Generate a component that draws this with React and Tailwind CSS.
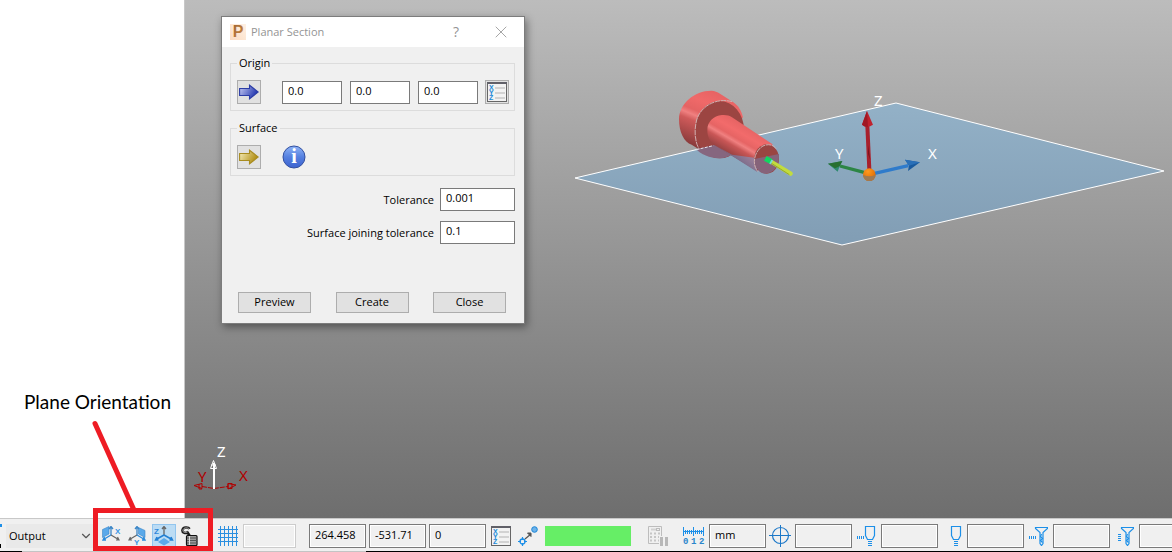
import React, { useState } from 'react';
import { ChevronDown, X } from 'lucide-react';

const ArrowIcon = ({ id, light, dark, edge }) => (
  <svg width="20" height="16" viewBox="0 0 20 16" aria-hidden="true">
    <defs>
      <linearGradient id={id} x1="0" y1="0" x2="1" y2="0.4">
        <stop offset="0" stopColor={light} />
        <stop offset="1" stopColor={dark} />
      </linearGradient>
    </defs>
    <path d="M.6 4.5H10.5V1.2L19.2 8l-8.7 6.8v-3.3H.6z" fill={`url(#${id})`} stroke={edge} strokeWidth="1.1" />
  </svg>
);

const XyzIcon = () => (
  <svg width="20" height="20" viewBox="0 0 20 20" aria-hidden="true">
    <rect x=".5" y=".5" width="19" height="19" fill="#f2f2f2" stroke="#666" />
    <rect width="20" height="2" fill="#606068" />
    <g fontFamily="Liberation Sans" fontWeight="bold" fontSize="7" fill="#1c8ad8">
      <text x="2" y="8">X</text>
      <text x="2" y="13">Y</text>
      <text x="2" y="18">Z</text>
    </g>
    <path d="M8 6H18M8 11H18M8 16H18" stroke="#d2d2d2" strokeWidth="2" />
  </svg>
);

const InfoIcon = () => (
  <svg width="24" height="24" viewBox="0 0 24 24" role="img" aria-label="Information">
    <defs>
      <linearGradient id="info" x1="0" y1="0" x2="0" y2="1">
        <stop offset="0" stopColor="#8fb4f6" />
        <stop offset="0.5" stopColor="#5580e0" />
        <stop offset="1" stopColor="#3c62cf" />
      </linearGradient>
    </defs>
    <circle cx="12" cy="12" r="11" fill="url(#info)" stroke="#3350a0" />
    <text x="12" y="18" textAnchor="middle" fontFamily="Liberation Serif" fontWeight="bold" fontSize="20" fill="#fff">i</text>
  </svg>
);

const AppIcon = () => (
  <svg width="16" height="16" viewBox="0 0 16 16" aria-hidden="true">
    <defs>
      <linearGradient id="app" x1="1" y1="0" x2="0" y2="1">
        <stop offset="0" stopColor="#fff1e4" />
        <stop offset="1" stopColor="#fbdcc2" />
      </linearGradient>
      <linearGradient id="appLetter" x1="0" y1="0" x2="1" y2="1">
        <stop offset="0" stopColor="#9a6434" />
        <stop offset="1" stopColor="#d38a3e" />
      </linearGradient>
    </defs>
    <rect width="16" height="16" fill="url(#app)" />
    <text x="8" y="13" textAnchor="middle" fontFamily="Liberation Sans" fontWeight="bold" fontSize="16" fill="url(#appLetter)">P</text>
  </svg>
);

const PlaneXIcon = () => (
  <svg width="20" height="20" viewBox="0 0 20 20" aria-hidden="true">
    <path d="M.5 3.500l6.500-3v7.500l-6.500 3.500z" fill="#5aa9ea" stroke="#3c86c6" strokeWidth=".6" />
    <path d="M9 9V1M7 3l2-2.500L11 3" fill="none" stroke="#3c86c6" strokeWidth="1.300" />
    <path d="M9 9l-7.500 4.500M4 14H1l1.500-3" fill="none" stroke="#2b8bdc" strokeWidth="1.400" />
    <path d="M9 9l7.500 4.500M14 14h3l-1.500-3" fill="none" stroke="#666" strokeWidth="1.200" />
    <text x="13" y="8" fontFamily="Liberation Sans" fontWeight="bold" fontSize="8" fill="#3b97e4">X</text>
  </svg>
);

const PlaneYIcon = () => (
  <svg width="20" height="20" viewBox="0 0 20 20" aria-hidden="true">
    <path d="M10.500 1.500l6.500 3v7l-6.500-3.500z" fill="#5aa9ea" stroke="#3c86c6" strokeWidth=".6" />
    <path d="M9 9V1M7 3l2-2.500L11 3" fill="none" stroke="#3c86c6" strokeWidth="1.300" />
    <path d="M9 9l-7.500 4.500M4 14H1l1.500-3" fill="none" stroke="#666" strokeWidth="1.200" />
    <path d="M9 9l7.500 4.500M14 14h3l-1.500-3" fill="none" stroke="#2b8bdc" strokeWidth="1.400" />
    <text x="6" y="19" fontFamily="Liberation Sans" fontWeight="bold" fontSize="8" fill="#3b97e4">Y</text>
  </svg>
);

const PlaneZIcon = () => (
  <svg width="20" height="20" viewBox="0 0 20 20" aria-hidden="true">
    <path d="M10 12l6 4-6 3.500L4 16z" fill="#5aa9ea" />
    <path d="M10 9V1M8 3l2-2.500L12 3" fill="none" stroke="#666" strokeWidth="1.300" />
    <path d="M10 9l-8 4.500M4.500 14H1.500l1.500-3M10 9l8 4.500M15.500 14h3l-1.500-3" fill="none" stroke="#2380d4" strokeWidth="1.500" />
    <text x="0" y="8" fontFamily="Liberation Sans" fontWeight="bold" fontSize="8" fill="#2f86da">Z</text>
  </svg>
);

const LockIcon = () => (
  <svg width="20" height="20" viewBox="0 0 20 20" aria-hidden="true">
    <path d="M9.500 2.800C8.500 1 3 .6 2.500 4S6 7.300 7.500 6.500L9.500 9.500" fill="none" stroke="#1a1a1a" strokeWidth="2.600" />
    <path d="M9 2.800C8 1.500 3.500 1.200 3 4S6 7 7.500 6" fill="none" stroke="#b5b5b5" strokeWidth=".9" />
    <rect x="6.500" y="9.500" width="10.500" height="10" rx="1" fill="#9c9c9c" stroke="#111" strokeWidth="1.200" />
    <path d="M7 12h10M7 14.500h10M7 17h10" stroke="#555" />
    <path d="M9.500 10v9" stroke="#ddd" />
  </svg>
);

const GridIcon = () => (
  <svg width="20" height="20" viewBox="0 0 20 20" aria-hidden="true">
    <path d="M2.500 0v20M6.500 0v20M10.500 0v20M14.500 0v20M18.500 0v20M0 3.500h20M0 7.500h20M0 11.500h20M0 15.500h20" stroke="#2b8fe0" />
  </svg>
);

const PointIcon = () => (
  <svg width="20" height="20" viewBox="0 0 20 20" aria-hidden="true">
    <circle cx="16.500" cy="3.500" r="2.800" fill="#6cb2ea" stroke="#1c86d6" />
    <path d="M7 13l6-5" stroke="#555" strokeWidth="1.200" />
    <path d="M9.500 7h3.500v3.500z" fill="#555" stroke="#555" />
    <circle cx="4.500" cy="15.500" r="2.500" fill="none" stroke="#1c8fe8" strokeWidth="1.300" />
    <path d="M4.500 11v3M4.500 17v3M0 15.500h3M6 15.500h3" stroke="#1c8fe8" strokeWidth="1.200" />
  </svg>
);

const CalcIcon = () => (
  <svg width="20" height="20" viewBox="0 0 20 20" aria-hidden="true">
    <path d="M.5.500h13V10M11 17.500H.5V.5" fill="none" stroke="#bdbdbd" />
    <path d="M3 3.500h6" stroke="#d2d2d2" strokeWidth="2" />
    <rect x="8.500" y="2.500" width="3" height="2" fill="none" stroke="#bdbdbd" />
    <path d="M2 7.500h11M2 11h9M2 14.500h9" stroke="#c6c6c6" strokeWidth="2" strokeDasharray="2 2" />
    <path d="M13.500 11v9M18.500 11v9" stroke="#b8b8b8" strokeWidth="3" />
  </svg>
);

const RulerIcon = () => (
  <svg width="22" height="20" viewBox="0 0 22 20" aria-hidden="true">
    <path d="M.5 1v9M10.500 1v9M20.500 1v9M0 5.500h21M2.500 4v4M4.500 4v4M6.500 4v4M8.500 4v4M12.500 4v4M14.500 4v4M16.500 4v4M18.500 4v4" stroke="#1c8fe8" />
    <g fontFamily="Liberation Mono" fontWeight="bold" fontSize="9" fill="#2a86cc">
      <text x="0" y="18">0</text>
      <text x="8" y="18">1</text>
      <text x="16" y="18">2</text>
    </g>
  </svg>
);

const TargetIcon = () => (
  <svg width="22" height="22" viewBox="0 0 22 22" fill="none" stroke="#1c78c8" aria-hidden="true">
    <circle cx="11.500" cy="10.500" r="8" strokeWidth="1.200" />
    <path d="M11.500 0v22M0 10.500h22" />
  </svg>
);

const ToolIcon = ({ lead }) => (
  <svg width="20" height="20" viewBox="0 0 20 20" fill="none" stroke="#1c8fe8" aria-hidden="true">
    <path d="M9.500.500h9v9l-2 4h-5l-2-4z" strokeWidth="1.200" />
    <path d="M12 15.500h4M12 17.500h4M12 19.500h4" />
    {lead && <path d="M1.500 10v3M3.500 10v3M5.500 10v3M7.500 10v3" />}
  </svg>
);

const DrillIcon = ({ side }) => (
  <svg width="20" height="20" viewBox="0 0 20 20" fill="none" stroke="#1c8fe8" aria-hidden="true">
    <path d="M7.500 1.500h12v1l-4.500 4v11l-1.500 2-1.500-2v-11l-4.500-4z" strokeWidth="1.200" />
    <path d="M13.500 8l-1 2.500 2 2-2 2 2 2" strokeWidth="1.200" />
    {side ? <path d="M4 8.500h3M4 10.500h3M4 12.500h3M4 14.500h3" /> : <path d="M1.500 10v3M3.500 10v3M5.500 10v3M7.500 10v3" />}
  </svg>
);

// 3D view: section plane, part and the two axis triads
const Scene = () => (
  <svg className="absolute left-0 top-0" width="987" height="518" viewBox="185 0 987 518" role="img" aria-label="3D view">
    <defs>
      <linearGradient id="plane" x1="0" y1="0" x2="0" y2="1">
        <stop offset="0" stopColor="#93b1c7" />
        <stop offset="1" stopColor="#819db4" />
      </linearGradient>
      <linearGradient id="head" gradientUnits="userSpaceOnUse" x1="125" y1="35" x2="55" y2="205">
        <stop offset="0" stopColor="#e86464" />
        <stop offset="0.2" stopColor="#f06969" />
        <stop offset="0.38" stopColor="#e46363" />
        <stop offset="0.46" stopColor="#f08080" />
        <stop offset="0.55" stopColor="#cf5a5a" />
        <stop offset="1" stopColor="#7d3535" />
      </linearGradient>
      <linearGradient id="shaft" gradientUnits="userSpaceOnUse" x1="245" y1="140" x2="190" y2="235">
        <stop offset="0" stopColor="#e46262" />
        <stop offset="0.3" stopColor="#f26b6b" />
        <stop offset="0.48" stopColor="#e66464" />
        <stop offset="0.58" stopColor="#f08080" />
        <stop offset="0.7" stopColor="#c95656" />
        <stop offset="1" stopColor="#8e3e3e" />
      </linearGradient>
      <linearGradient id="under" gradientUnits="userSpaceOnUse" x1="230" y1="220" x2="200" y2="255">
        <stop offset="0" stopColor="#9a7f9a" />
        <stop offset="1" stopColor="#6f6584" />
      </linearGradient>
      <radialGradient id="ball" cx="0.4" cy="0.25" r="0.8">
        <stop offset="0" stopColor="#ff9a20" />
        <stop offset="1" stopColor="#d86400" />
      </radialGradient>
    </defs>
    <polygon points="575,178 896,103 1164,171 842,245" fill="url(#plane)" stroke="#fff" />
    <g transform="translate(670 80) scale(0.3333)">
      <path d="M125 32C134 33 142 36 150 41L190 67C206 78 214 92 219 112L114 225L65 194C42 188 27 155 27 118C27 70 75 31 125 32z" fill="url(#head)" />
      <ellipse cx="149" cy="149" rx="73" ry="86" fill="#9c4542" />
      <path d="M79 208L130 196L216 184C202 216 178 235 149 235C118 235 92 222 79 208z" fill="#86667f" />
      <path d="M79 209L130 197" stroke="#e4e4ee" strokeWidth="3" strokeDasharray="9 4" />
      <path d="M186 65C140 52 92 78 80 120C72 150 74 185 88 208" fill="none" stroke="#cfb0b0" strokeWidth="3" strokeDasharray="16 2" />
      <path d="M156 105C168 104 178 106 186 112L308 193L262 273L134 196C118 185 112 168 112 150C112 126 130 107 156 105z" fill="url(#shaft)" />
      <path d="M140 199L160 210L186 224L258 234L262 276z" fill="url(#under)" />
      <ellipse cx="290" cy="237" rx="37" ry="44" fill="#9a4542" />
      <path d="M253 237L327 222C329 256 312 281 285 281C266 279 254 263 253 237z" fill="#86637a" />
      <path d="M318 206C310 192 284 188 268 207C250 226 248 258 264 275" fill="none" stroke="#cfb0b0" strokeWidth="3" strokeDasharray="16 2" />
      <path d="M305 246L362 281" stroke="#c2dc3e" strokeWidth="13" strokeLinecap="round" />
      <path d="M303 249L358 284" stroke="#93a832" strokeWidth="3" />
      <path d="M286 235L304 245" stroke="#10d860" strokeWidth="16" />
      <path d="M300 252L307 240" stroke="#75dcd0" strokeWidth="5" />

      <path d="M598 268L592 135" stroke="#a8202c" strokeWidth="12" />
      <path d="M594 222V195L601 240z" fill="#7c121d" />
      <path d="M591 93L609 134Q592 146 576 134z" fill="#c0222e" />
      <path d="M591 93L594 141Q582 141 576 134z" fill="#a01824" />
      <path d="M614 280L715 257" stroke="#2f7bcb" strokeWidth="10" />
      <path d="M705 239L750 247L714 273L717 257z" fill="#195a9e" />
      <path d="M705 239L750 247L717 257z" fill="#2a70b8" />
      <path d="M582 277L510 258" stroke="#2c8545" strokeWidth="10" />
      <path d="M474 251L517 243L509 259L503 275z" fill="#2f8a70" />
      <path d="M474 251L517 243L509 259L495 265z" fill="#286f30" />
      <circle cx="598" cy="284" r="19" fill="url(#ball)" />
      <path d="M579 284Q598 294 617 284A19 19 0 0 1 579 284z" fill="#a07a52" />
    </g>
    <g fontFamily="Noto Sans" fontSize="15" fill="#fff">
      <text x="874" y="106">Z</text>
      <text x="835" y="159">Y</text>
      <text x="928" y="159">X</text>
      <text x="217" y="457">Z</text>
    </g>
    <g fontFamily="Noto Sans" fontSize="15" fill="#b00000">
      <text x="198" y="482">Y</text>
      <text x="239" y="481">X</text>
    </g>
    <path d="M202 486.500L214 488.500L228 486.500" fill="none" stroke="#b00000" strokeDasharray="5 1" />
    <path d="M194 485.500l8-2v5zM199 484v5h3M236 485l-8-1.500v5.500zM228 483.500h4v5h-4z" fill="none" stroke="#b00000" />
    <path d="M214 489V463" stroke="#fff" strokeWidth="2" />
    <path d="M213.500 460.500l3 8h-6zM211 465h5" fill="none" stroke="#fff" />
  </svg>
);

const IconButton = ({ label, children }) => (
  <button type="button" aria-label={label} className="flex size-6 shrink-0 items-center justify-center border border-[#adadad] bg-[#e1e1e1]">
    {children}
  </button>
);

const Group = ({ title, children }) => (
  <fieldset className="border border-[#dcdcdc] pb-1.5 pl-1.5 pr-[5px]">
    <legend className="px-0.5 leading-4">{title}</legend>
    <div className="flex items-center pt-[9px]">{children}</div>
  </fieldset>
);

const fieldClass = 'h-[23px] border border-[#7a7a7a] bg-white px-[5px] pb-1 outline-none';

const PlanarSection = () => {
  const [origin, setOrigin] = useState(['0.0', '0.0', '0.0']);
  const [tolerance, setTolerance] = useState('0.001');
  const [joining, setJoining] = useState('0.1');

  return (
    <section className="absolute left-9 top-4 w-[304px] border border-[#7c7c7c] bg-[#f0f0f0] text-black shadow-[2px_3px_8px_rgba(0,0,0,0.4)]">
      <header className="flex h-[30px] items-center bg-white pl-2 text-[#949494]">
        <AppIcon />
        <h1 className="grow pl-[5px]">Planar Section</h1>
        <button type="button" aria-label="Help" className="w-4 text-sm">?</button>
        <button type="button" aria-label="Close dialog" className="ml-[27px] mr-[13px]">
          <X size={20} strokeWidth={1} />
        </button>
      </header>

      <div className="flex flex-col gap-[9px] pl-2 pr-[9px] pt-2">
        <Group title="Origin">
          <IconButton label="Pick origin">
            <ArrowIcon id="blueArrow" light="#c9cdf4" dark="#2438b0" edge="#2c3da6" />
          </IconButton>
          <div className="flex grow gap-2 pl-[21px]">
            {origin.map((value, i) => (
              <input
                key={i}
                aria-label={`Origin ${'XYZ'[i]}`}
                value={value}
                onChange={(e) => setOrigin(origin.map((v, j) => (j === i ? e.target.value : v)))}
                className={`${fieldClass} w-[60px]`}
              />
            ))}
          </div>
          <IconButton label="Position"><XyzIcon /></IconButton>
        </Group>

        <Group title="Surface">
          <IconButton label="Pick surface">
            <ArrowIcon id="goldArrow" light="#f7f0c0" dark="#b08c10" edge="#a88c20" />
          </IconButton>
          <span className="pl-[21px]"><InfoIcon /></span>
        </Group>
      </div>

      <div className="flex flex-col gap-2.5 pl-2 pr-[9px] pt-3">
        <div className="flex items-center justify-end gap-1.5">
          <label htmlFor="tolerance" className="pt-0.5">Tolerance</label>
          <input id="tolerance" value={tolerance} onChange={(e) => setTolerance(e.target.value)} className={`${fieldClass} w-[75px]`} />
        </div>
        <div className="flex items-center justify-end gap-1.5">
          <label htmlFor="joining" className="pt-0.5">Surface joining tolerance</label>
          <input id="joining" value={joining} onChange={(e) => setJoining(e.target.value)} className={`${fieldClass} w-[75px]`} />
        </div>
      </div>

      <div className="flex justify-between pb-2.5 pl-4 pr-[18px] pt-12">
        {['Preview', 'Create', 'Close'].map((name) => (
          <button key={name} type="button" className="h-[21px] w-[73px] border border-[#adadad] bg-[#e1e1e1]">
            {name}
          </button>
        ))}
      </div>
    </section>
  );
};

const StatusField = ({ label, value = '' }) => (
  <input
    aria-label={label}
    defaultValue={value}
    className="h-6 w-[57px] shrink-0 border border-[#7a7a7a] bg-[#f0f0f0] px-[5px] pb-1 shadow-[inset_0_0_0_1px_#fff] outline-none"
  />
);

const Tool = ({ label, active, children }) => (
  <button type="button" aria-label={label} aria-pressed={active} className={`flex size-6 shrink-0 items-center justify-center ${active ? 'border border-[#92c5ee] bg-[#bcdcf4]' : ''}`}>
    {children}
  </button>
);

const ToolField = ({ label, icon }) => (
  <div className="flex gap-[3px] pl-0.5">
    <Tool label={label}>{icon}</Tool>
    <StatusField label={`${label} value`} />
  </div>
);

const StatusBar = () => (
  <footer className="overflow-hidden border-t border-[#c8c8c8] bg-[#f0f0f0] text-black">
    <div className="flex items-center pb-[3px] pt-[5px]">
      <div className="flex h-6 w-1.5 shrink-0 flex-col justify-between">
        <span className="h-[3px] w-0.5 bg-[#1c8fe8]" />
        <span className="h-1 w-px bg-black" />
      </div>
      <div className="relative shrink-0">
        <select aria-label="Workplane" className="h-6 w-[87px] appearance-none bg-[#e9e9e9] pl-[3px] outline-none">
          <option>Output</option>
        </select>
        <ChevronDown size={14} strokeWidth={2} className="pointer-events-none absolute right-0 top-[5px] text-[#555]" />
      </div>
      <div className="flex gap-0.5 pl-[7px]">
        <Tool label="YZ plane"><PlaneXIcon /></Tool>
        <Tool label="ZX plane"><PlaneYIcon /></Tool>
        <Tool label="XY plane" active><PlaneZIcon /></Tool>
        <Tool label="Lock plane"><LockIcon /></Tool>
      </div>
      <div className="flex gap-[3px] pl-[14px]">
        <Tool label="Grid"><GridIcon /></Tool>
        <input aria-label="Grid size" disabled className="h-6 w-[53px] border border-[#ccc] bg-[#f0f0f0] shadow-[inset_0_0_0_1px_#fff]" />
      </div>
      <div className="flex gap-[3px] pl-[13px] pr-[3px]">
        <StatusField label="Cursor X" value="264.458" />
        <StatusField label="Cursor Y" value="-531.71" />
        <StatusField label="Cursor Z" value="0" />
      </div>
      <div className="flex gap-[3px]">
        <Tool label="Position"><XyzIcon /></Tool>
        <Tool label="Snap point"><PointIcon /></Tool>
      </div>
      <div className="ml-[5px] mr-[15px] h-5 w-[86px] shrink-0 bg-[#66ee66]" />
      <div className="flex items-center gap-3 pr-[3px]">
        <Tool label="Calculator"><CalcIcon /></Tool>
        <Tool label="Units"><RulerIcon /></Tool>
      </div>
      <StatusField label="Unit" value="mm" />
      <ToolField label="Tolerance" icon={<TargetIcon />} />
      <ToolField label="Tool diameter" icon={<ToolIcon lead />} />
      <ToolField label="Tip radius" icon={<ToolIcon />} />
      <ToolField label="Drill offset" icon={<DrillIcon />} />
      <ToolField label="Drill depth" icon={<DrillIcon side />} />
    </div>
    <div className="flex h-px">
      <span className="w-[22px] bg-black" />
      <span className="w-[344px] bg-[#c4c4c4]" />
      <span className="grow bg-black" />
    </div>
  </footer>
);

const Annotation = () => (
  <>
    <p className="absolute bottom-[138px] left-6 whitespace-nowrap font-['Lato'] text-[19px] leading-6 text-black">Plane Orientation</p>
    <svg className="pointer-events-none absolute bottom-0 left-[90px]" width="126" height="134" viewBox="90 418 126 134" fill="none" stroke="#ee1c24" strokeWidth="5" aria-hidden="true">
      <path d="M95 423.500L134 510" strokeLinecap="round" />
      <rect x="95.500" y="510.500" width="115" height="38" />
    </svg>
  </>
);

const App = () => (
  <div className="relative flex h-screen flex-col overflow-hidden bg-white font-['Open_Sans',sans-serif] text-[11px]">
    <main className="flex min-h-0 grow">
      <aside className="w-[185px] shrink-0 border-r border-[#c8c8c8] bg-white" />
      <div className="relative grow overflow-hidden bg-linear-to-b from-[#bcbcbc] to-[#6e6e6e]">
        <Scene />
        <PlanarSection />
      </div>
    </main>
    <StatusBar />
    <Annotation />
  </div>
);

export default App;
